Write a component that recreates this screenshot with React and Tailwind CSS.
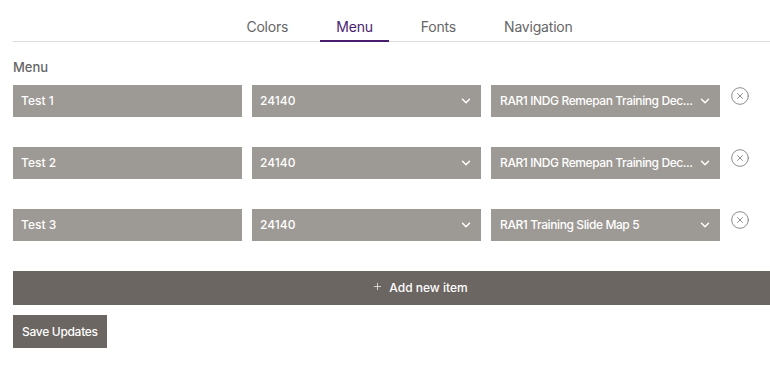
import { ChevronDown, CircleX, Plus } from 'lucide-react';

const items = [
  { name: 'Test 1', code: '24140', page: 'RAR1 INDG Remepan Training Dec...' },
  { name: 'Test 2', code: '24140', page: 'RAR1 INDG Remepan Training Dec...' },
  { name: 'Test 3', code: '24140', page: 'RAR1 Training Slide Map 5' },
];

const tabs = ['Colors', 'Menu', 'Fonts', 'Navigation'];

function App() {
  return (
    <div className="w-[770px] h-[367px] overflow-hidden bg-white" style={{ fontFamily: 'Inter, "Noto Sans", sans-serif' }}>
      <div className="ml-[13px] w-[814px]">
        {/* Tabs */}
        <div className="flex justify-center gap-4 pr-[21px] border-b border-[#dcdcdc] pt-[16px]">
          {tabs.map((tab) => (
            <div
              key={tab}
              className={`px-4 pb-[2px] text-[14px] leading-[22px] tracking-[-0.2px] border-b-2 -mb-px ${
                tab === 'Menu' ? 'text-[#4b1d6e] border-[#4b1d6e]' : 'text-[#666] border-transparent'
              }`}
            >
              {tab}
            </div>
          ))}
        </div>

        <p className="mt-[16px] text-[13px] font-medium text-[#666] leading-[18px]">Menu</p>

        {/* Items */}
        <div className="mt-[9px] flex flex-col gap-[30px]">
          {items.map((item) => (
            <div key={item.name} className="flex items-start gap-[10px]">
              <div className="w-[229px] h-[32px] bg-[#9d9994] px-[8px] flex items-center text-[12px] font-medium text-white">
                {item.name}
              </div>
              <div className="w-[229px] h-[32px] bg-[#9d9994] px-[8px] flex items-center justify-between text-[12px] font-medium text-white">
                <span>{item.code}</span>
                <ChevronDown size={14} strokeWidth={2.5} />
              </div>
              <div className="w-[229px] h-[32px] bg-[#9d9994] pl-[9px] pr-[8px] flex items-center justify-between text-[12px] font-medium text-white">
                <span className="whitespace-nowrap tracking-[-0.4px]">{item.page}</span>
                <ChevronDown size={14} strokeWidth={2.5} className="shrink-0 ml-1" />
              </div>
              <CircleX size={20} strokeWidth={1} className="text-[#777] mt-[1px]" />
            </div>
          ))}
        </div>

        <button className="mt-[30px] w-full h-[34px] bg-[#6b6661] flex items-center justify-center gap-[6px] text-[12px] font-medium text-white">
          <Plus size={11} strokeWidth={1.5} className="-mt-[4px]" />
          Add new item
        </button>

        <button className="mt-[10px] h-[33px] px-[9px] bg-[#6b6661] text-[12px] font-medium text-white tracking-[-0.3px]">
          Save Updates
        </button>
      </div>
    </div>
  );
}

export default App;
